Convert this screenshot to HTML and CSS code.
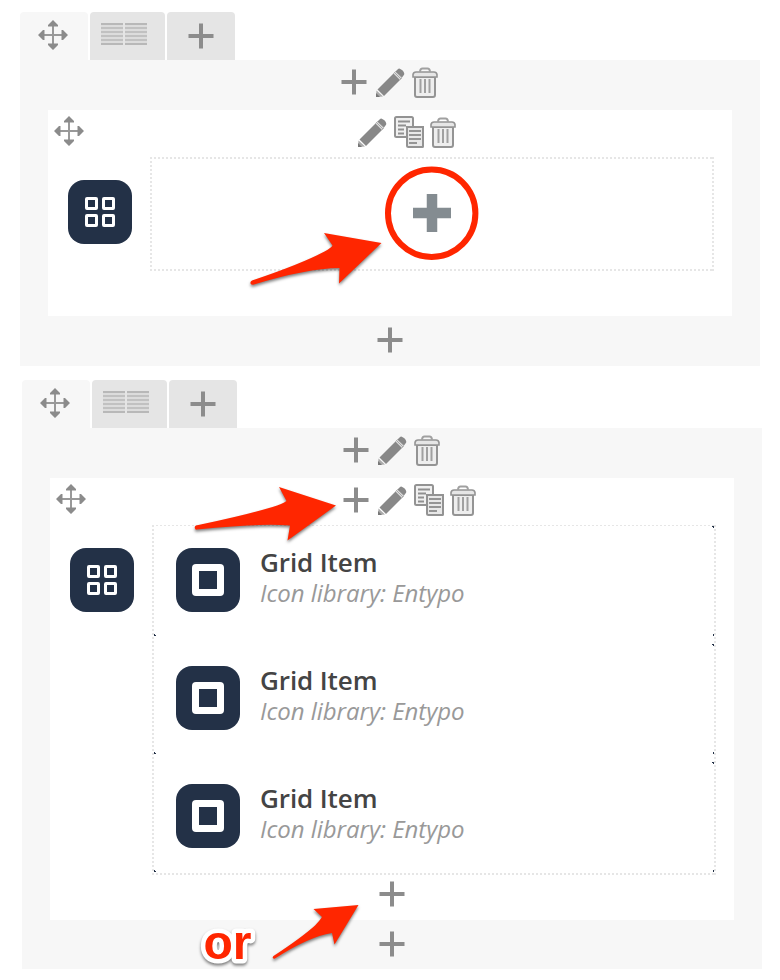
FILE: index.html
```html
<!DOCTYPE html>
<html lang="en">
<head>
<meta charset="utf-8">
<title>Grid builder</title>
<link rel="stylesheet" href="styles.css">
</head>
<body>
<svg class="defs" aria-hidden="true">
  <symbol id="plus" viewBox="0 0 36 36"><path d="M18 5.500v25M5.500 18h25" fill="none" stroke="#8c8c8c" stroke-width="4"/></symbol>
  <symbol id="move" viewBox="0 0 30 30"><path d="M15 4v22M4 15h22" stroke="#999" stroke-width="2"/><path d="M15 0l5 5v1.500H10V5zM15 30l5-5v-1.500H10V25zM0 15l5-5h1.500v10H5zM30 15l-5-5h-1.500v10h1.500z" fill="#8b8b8b"/></symbol>
  <symbol id="pencil" viewBox="0 0 36 36"><path d="M5.500 25.500L21.500 9.500l6.500 6.500-16 16z" fill="#888"/><path d="M4.500 26.500l6.500 6-7 .5z" fill="#aaa"/><path d="M4 29l4 4H4z" fill="#777"/><path d="M21.500 9.500l2-2 6.500 6.500-2 2z" fill="#ddd" stroke="#aaa" stroke-width=".7"/><path d="M22.500 8.500l6.500 6.500" stroke="#999" stroke-width=".8"/><path d="M23.500 7.500l2.300-2.300q1-1 2-.5 4 1.500 4.500 5 .1.800-.8 1.700L30 13.500z" fill="#888"/></symbol>
  <symbol id="trash" viewBox="0 0 36 36"><path d="M7 13h20v18q0 2-2 2H9q-2 0-2-2z" fill="#eee" stroke="#949494" stroke-width="2"/><path d="M12.500 15v14M17 15v14M21.500 15v14" stroke="#a0a0a0" stroke-width="2"/><path d="M12 7.500q.3-3 2.500-3h5q2.200 0 2.500 3" fill="none" stroke="#a0a0a0" stroke-width="2"/><path d="M5 13V10.500Q5.500 8 8 8h18q2.500 0 3 2.500V13z" fill="#e6e6e6" stroke="#949494" stroke-width="1.600"/></symbol>
  <symbol id="copy" viewBox="0 0 36 36"><rect x="5" y="3" width="18" height="20" rx="1.500" fill="#f0f0f0" stroke="#939393" stroke-width="2"/><path d="M8 7.500h12M8 11.500h8M8 15.500h6M8 19.500h6" stroke="#909090" stroke-width="1.900"/><path d="M17 13h16v19.500q0 .5-.5.500h-14q-1.500 0-1.500-1.500z" fill="#e8e8e8" stroke="#939393" stroke-width="2"/><path d="M19 17h12M19 21h12M19 25h12M19 29h8" stroke="#959595" stroke-width="1.900"/></symbol>
  <symbol id="grid" viewBox="0 0 64 64"><g fill="none" stroke="#fff" stroke-width="3"><rect x="18.500" y="18.500" width="10" height="10" rx=".5"/><rect x="35.500" y="18.500" width="10" height="10" rx=".5"/><rect x="18.500" y="35.500" width="10" height="10" rx=".5"/><rect x="35.500" y="35.500" width="10" height="10" rx=".5"/></g></symbol>
  <symbol id="square" viewBox="0 0 64 64"><rect x="16" y="16" width="32" height="32" rx="4" fill="#fff"/><path d="M23 23h18v18H23z" fill="#233147"/></symbol>
</svg>

<section class="panel">
  <div class="tabs">
    <div class="tab active"><svg class="move"><use href="#move"/></svg></div>
    <div class="tab wide"><div class="columns"><i></i><i></i></div></div>
    <div class="tab"><svg class="icon"><use href="#plus"/></svg></div>
  </div>
  <div class="body">
    <div class="tools"><svg class="icon"><use href="#plus"/></svg><svg class="icon"><use href="#pencil"/></svg><svg class="icon"><use href="#trash"/></svg></div>
    <div class="block first">
      <div class="block-head">
        <svg class="move"><use href="#move"/></svg>
        <div class="tools"><svg class="icon"><use href="#pencil"/></svg><svg class="icon"><use href="#copy"/></svg><svg class="icon"><use href="#trash"/></svg></div>
      </div>
      <div class="content">
        <div class="badge"><svg><use href="#grid"/></svg></div>
        <div class="drop empty"><svg class="add" viewBox="0 0 38 38"><path d="M19 0v38M0 19h38" stroke="#848c91" stroke-width="10.500"/></svg></div>
      </div>
    </div>
    <div class="foot"><svg class="icon"><use href="#plus"/></svg></div>
  </div>
</section>

<section class="panel second">
  <div class="tabs">
    <div class="tab active"><svg class="move"><use href="#move"/></svg></div>
    <div class="tab wide"><div class="columns"><i></i><i></i></div></div>
    <div class="tab"><svg class="icon"><use href="#plus"/></svg></div>
  </div>
  <div class="body">
    <div class="tools"><svg class="icon"><use href="#plus"/></svg><svg class="icon"><use href="#pencil"/></svg><svg class="icon"><use href="#trash"/></svg></div>
    <div class="block">
      <div class="block-head">
        <svg class="move"><use href="#move"/></svg>
        <div class="tools"><svg class="icon"><use href="#plus"/></svg><svg class="icon"><use href="#pencil"/></svg><svg class="icon"><use href="#copy"/></svg><svg class="icon"><use href="#trash"/></svg></div>
      </div>
      <div class="content">
        <div class="badge"><svg><use href="#grid"/></svg></div>
        <div class="drop list">
          <div class="item"><div class="badge"><svg><use href="#square"/></svg></div><div class="label"><div class="title">Grid Item</div><div class="meta">Icon library: Entypo</div></div></div>
          <div class="item"><div class="badge"><svg><use href="#square"/></svg></div><div class="label"><div class="title">Grid Item</div><div class="meta">Icon library: Entypo</div></div></div>
          <div class="item"><div class="badge"><svg><use href="#square"/></svg></div><div class="label"><div class="title">Grid Item</div><div class="meta">Icon library: Entypo</div></div></div>
        </div>
      </div>
      <div class="block-foot"><svg class="icon"><use href="#plus"/></svg></div>
    </div>
    <div class="foot"><svg class="icon"><use href="#plus"/></svg></div>
  </div>
</section>

<svg class="notes" viewBox="0 0 780 980">
  <circle cx="431.700" cy="213.200" r="43.700" fill="none" stroke="#ff2600" stroke-width="6"/>
  <g class="arrows">
    <path d="M381.500 243L324 233l8.500 12.500q-1 2-8 6Q301 264 252 280.500q-2 1-1.500 3 1 1.700 3.500 1Q306 268.500 339.500 268l-.5 15.500z"/>
    <path d="M336 505.500L279 487l7.500 14q-4 3-14 6Q244 515.500 196 525.500q-1.500.5-1.200 2.500.2 2 2.200 1.600Q258 523 290 525.500l-2.500 15z"/>
    <path d="M358.500 905L313.500 909l8.500 8q-2 3-7 8.500Q301 938 273.500 956q-1 1-.7 2 .8 1.200 2.200.6Q308 937 332 933l2.500 11.500z"/>
  </g>
  <text class="or" x="203.500" y="959">or</text>
</svg>
</body>
</html>
```
FILE: styles.css
```css
* { box-sizing: border-box; }
body {
  margin: 0;
  position: relative;
  height: 980px;
  padding: 12px 20px 0;
  background: #fff;
  font-family: "Open Sans", "Noto Sans", sans-serif;
  overflow: hidden;
}
svg { display: block; flex: none; }
.defs { position: absolute; width: 0; height: 0; }
.icon { width: 36px; height: 36px; }
.move { width: 30px; height: 30px; }
.panel { width: 740px; }
.second { margin: 14px 0 0 2px; }

.tabs { display: flex; gap: 2px; height: 48px; }
.tab {
  width: 68px;
  background: #e5e5e5;
  border-radius: 4px 4px 0 0;
  display: flex;
  justify-content: center;
  padding-top: 6px;
}
.tab.active { background: #f7f7f7; justify-content: flex-start; padding: 8px 0 0 18px; }
.tab.wide { width: 75px; justify-content: flex-start; padding: 11px 0 0 11px; }
.columns { display: flex; gap: 2px; height: 22px; }
.columns i {
  width: 22px;
  background: repeating-linear-gradient(#c1c1c1 0 2px, #dcdcdc 2px 4px);
  border: solid #b8b8b8;
  border-width: 2px 0;
  background-origin: border-box;
}

.body { background: #f7f7f7; padding: 0 28px; }
.tools { display: flex; justify-content: center; height: 50px; padding-top: 4px; }
.block { background: #fff; height: 442px; }
.block.first { height: 206px; }
.block-head { display: flex; height: 47px; padding-left: 6px; }
.block-head .move { margin-top: 6px; }
.block-head .tools { flex: 1; justify-content: flex-start; padding-left: 270px; }
.second .block-head .tools { padding-left: 252px; }
.content { display: flex; padding-left: 20px; }
.badge { width: 64px; height: 64px; border-radius: 16px; background: #233147; flex: none; }
.badge svg { width: 64px; height: 64px; }
.content > .badge { margin: 23px 18px 0 0; }
.drop {
  --v: repeating-linear-gradient(#e6e6e6 0 2px, transparent 2px 4px);
  --h: repeating-linear-gradient(90deg, #e6e6e6 0 2px, transparent 2px 4px);
  width: 564px;
  background: var(--h) top / 100% 2px no-repeat, var(--h) bottom / 100% 2px no-repeat,
    var(--v) left / 2px 100% no-repeat, var(--v) right / 2px 100% no-repeat;
}
.empty { height: 114px; padding: 37px 0 0 263px; }
.add { width: 38px; height: 38px; }
.list {
  height: 350px;
  padding: 1px 2px 3px;
  display: flex;
  flex-direction: column;
  gap: 8px;
  background-size: 100% 1px, 100% 2px, 2px 100%, 2px 100%;
}
.item {
  --c: #233147;
  height: 110px;
  padding: 22px;
  display: flex;
  gap: 20px;
  background: linear-gradient(var(--c), var(--c)) right top / 2px 1px no-repeat,
    linear-gradient(var(--c), var(--c)) right top / 1px 2px no-repeat,
    linear-gradient(var(--c), var(--c)) right bottom / 1px 2px no-repeat,
    linear-gradient(var(--c), var(--c)) left bottom / 2px 1px no-repeat,
    linear-gradient(var(--c), var(--c)) left bottom / 1px 2px no-repeat;
}
.label { white-space: nowrap; margin-top: -1px; }
.title { font-size: 26px; font-weight: 600; line-height: 30px; color: #444; letter-spacing: -.1px; }
.meta { font-size: 24px; font-style: italic; line-height: 32px; color: #999; letter-spacing: -.04px; }
.block-foot { display: flex; justify-content: center; padding-top: 1px; }
.foot { display: flex; justify-content: center; height: 50px; padding-top: 6px; }
.second .foot { height: 49px; }

.notes { position: absolute; left: 0; top: 0; width: 780px; height: 980px; }
.arrows { fill: #ff2600; filter: drop-shadow(0 2px 1.5px rgba(0, 0, 0, .5)); }
.or {
  font: bold 48px "Liberation Sans", sans-serif;
  fill: #ff2600;
  stroke: #fff;
  stroke-width: 9px;
  stroke-linejoin: round;
  paint-order: stroke;
  filter: drop-shadow(0 2px 1.5px rgba(0, 0, 0, .5));
}
```
